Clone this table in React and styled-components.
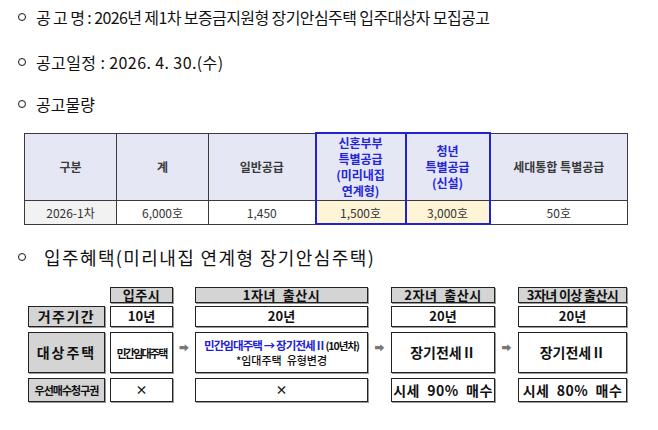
import React, { Fragment } from 'react';
import styled, { createGlobalStyle } from 'styled-components';

const GlobalStyle = createGlobalStyle`
    body{
        margin : 0;
        background : #fff;
        font-family : "Noto Sans CJK KR", "Noto Sans", sans-serif;
        color : #111;
    }
`;

const Page = styled.div`
    width : 658px;
    height : 430px;
    display : flex;
    flex-direction : column;
    padding : 5px 0 0 0;
    box-sizing : border-box;
    overflow : hidden;
`;

const Line = styled.div`
    display : flex;
    align-items : center;
    height : 24px;
    margin-top : ${props => props.top || 0}px;
    padding-left : 18px;
    font-size : ${props => props.size || 16}px;
    letter-spacing : ${props => props.spacing || 0}px;
    white-space : pre;
`;

const Bullet = styled.span`
    display : inline-block;
    width : 6px;
    height : 6px;
    border : 1.6px solid #111;
    border-radius : 50%;
    margin-right : ${props => props.gap || 10}px;
    flex : none;
`;

const Table = styled.table`
    margin : 16px 0 0 24px;
    width : 603px;
    border-collapse : collapse;
    table-layout : fixed;
    font-size : 12px;
    color : #333;
    text-align : center;
`;

const Head = styled.th`
    height : 66px;
    padding : 0;
    font-weight : 700;
    line-height : 16px;
    background : #e5e7f4;
    border : 1px solid #3a3a3a;
    color : ${props => props.blue ? '#2424d8' : '#3a3a3a'};
    ${props => props.blue && `
        border : 2px solid #2222d4;
        border-bottom : 1px solid #3a3a3a;
    `}
`;

const Cell = styled.td`
    height : 22px;
    padding : 0;
    background : ${props => props.bg || '#fff'};
    border : 1px solid #3a3a3a;
    ${props => props.blue && `
        border : 2px solid #2222d4;
        border-top : 1px solid #3a3a3a;
    `}
`;

const Diagram = styled.div`
    margin : 18px 0 0 28px;
    display : grid;
    grid-template-columns : 77px 5px 63px 22px 173px 23px 104px 23px 109px;
    grid-template-rows : 14px 21px 41px 24px;
    row-gap : 5px;
`;

const Box = styled.div`
    grid-column : ${props => props.col};
    grid-row : ${props => props.row};
    display : flex;
    flex-direction : column;
    align-items : center;
    justify-content : center;
    box-sizing : border-box;
    border : 1px solid #222;
    box-shadow : 1px 1px 0 #9a9a9a;
    background : ${props => props.grey ? '#d4d4d4' : '#fff'};
    font-weight : 700;
    font-size : ${props => props.size || 13}px;
    letter-spacing : ${props => props.spacing || 0}px;
    white-space : pre;
    line-height : 1.15;
    margin-bottom : ${props => props.head ? -2 : 0}px;
    color : #111;
`;

const Arrow = styled.div`
    grid-row : 3;
    grid-column : ${props => props.col};
    display : flex;
    align-items : center;
    justify-content : center;
    padding-bottom : 10px;
    font-size : 10px;
    color : #777;
`;

const Row = styled.div`
    display : flex;
    align-items : baseline;
    line-height : 14px;
`;

const Blue = styled.span`
    color : #2222d4;
    font-size : 11.5px;
    letter-spacing : -0.9px;
`;

const Small = styled.span`
    font-size : ${props => props.size || 11}px;
    font-weight : ${props => props.weight || 700};
    letter-spacing : ${props => props.spacing || 0}px;
    line-height : 14px;
`;

const columns = [
    { head : '입주시', col : 3 },
    { head : '1자녀  출산시', col : 5 },
    { head : '2자녀  출산시', col : 7 },
    { head : '3자녀 이상 출산시', col : 9, spacing : -0.6 }
];

class App extends React.Component{
    render(){
        return(
            <Fragment>
                <GlobalStyle />
                <Page>
                    <Line spacing={-0.6}><Bullet />공 고 명 : 2026년 제1차 보증금지원형 장기안심주택 입주대상자 모집공고</Line>
                    <Line top={21} spacing={0.4}><Bullet />공고일정 : 2026. 4. 30.(수)</Line>
                    <Line top={18}><Bullet />공고물량</Line>

                    <Table>
                        <colgroup>
                            <col style={{ width : 92 }} />
                            <col style={{ width : 92 }} />
                            <col style={{ width : 107 }} />
                            <col style={{ width : 90 }} />
                            <col style={{ width : 84 }} />
                            <col style={{ width : 138 }} />
                        </colgroup>
                        <thead>
                            <tr>
                                <Head>구분</Head>
                                <Head>계</Head>
                                <Head>일반공급</Head>
                                <Head blue>신혼부부<br />특별공급<br />(미리내집<br />연계형)</Head>
                                <Head blue>청년<br />특별공급<br />(신설)</Head>
                                <Head>세대통합 특별공급</Head>
                            </tr>
                        </thead>
                        <tbody>
                            <tr>
                                <Cell bg="#f2f2f2">2026-1차</Cell>
                                <Cell>6,000호</Cell>
                                <Cell>1,450</Cell>
                                <Cell blue bg="#fdf5d6">1,500호</Cell>
                                <Cell blue bg="#fdf5d6">3,000호</Cell>
                                <Cell>50호</Cell>
                            </tr>
                        </tbody>
                    </Table>

                    <Line top={20} size={18} spacing={1.4}><Bullet gap={18} />입주혜택(미리내집 연계형 장기안심주택)</Line>

                    <Diagram>
                        {columns.map(c => (
                            <Box key={c.col} grey head col={c.col} row={1} size={13} spacing={c.spacing || 0.5}>{c.head}</Box>
                        ))}

                        <Box grey col={1} row={2} size={14} spacing={1.5}>거주기간</Box>
                        <Box col={3} row={2}>10년</Box>
                        <Box col={5} row={2}>20년</Box>
                        <Box col={7} row={2}>20년</Box>
                        <Box col={9} row={2}>20년</Box>

                        <Box grey col={1} row={3} size={14} spacing={2}>대상주택</Box>
                        <Box col={3} row={3}><Small size={11} spacing={-1.8}>민간임대주택</Small></Box>
                        <Arrow col={4}>➡</Arrow>
                        <Box col={5} row={3}>
                            <Row><Blue>민간임대주택 → 장기전세Ⅱ</Blue><Small size={10.5} spacing={-1}>(10년차)</Small></Row>
                            <Small size={11} weight={500}>*임대주택  유형변경</Small>
                        </Box>
                        <Arrow col={6}>➡</Arrow>
                        <Box col={7} row={3} size={14}>장기전세Ⅱ</Box>
                        <Arrow col={8}>➡</Arrow>
                        <Box col={9} row={3} size={14}>장기전세Ⅱ</Box>

                        <Box grey col={1} row={4} size={11} spacing={-1}>우선매수청구권</Box>
                        <Box col={3} row={4} size={12}>×</Box>
                        <Box col={5} row={4} size={12}>×</Box>
                        <Box col={7} row={4} size={14} spacing={0.5}>시세  90%  매수</Box>
                        <Box col={9} row={4} size={14} spacing={0.5}>시세  80%  매수</Box>
                    </Diagram>
                </Page>
            </Fragment>
        );
    }
}

export default App;
